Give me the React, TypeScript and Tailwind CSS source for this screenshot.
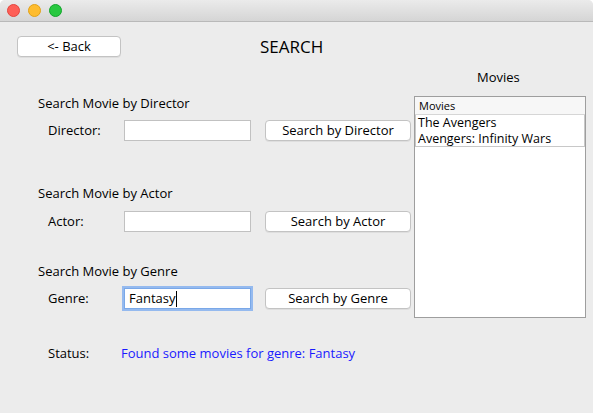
import React, { useState } from "react";

const font = { fontFamily: '"Open Sans", "Noto Sans", sans-serif' };

const MacButton = ({ children, className = "" }: { children: React.ReactNode; className?: string }) => (
  <button
    className={`h-[21px] rounded-[4px] border border-[#c3c3c3] bg-white text-[13px] leading-none text-black shadow-[0_1px_0_rgba(0,0,0,0.06)] ${className}`}
  >
    {children}
  </button>
);

const SearchRow = ({
  label,
  value,
  button,
  focused = false,
}: {
  label: string;
  value?: string;
  button: string;
  focused?: boolean;
}) => (
  <div className="flex h-[21px] items-center">
    <span className="w-[86px] pl-[10px] text-[13px] text-black">{label}</span>
    <div
      className={`flex h-[21px] w-[127px] items-center bg-white px-[4px] text-[13px] text-black ${
        focused
          ? "border border-[#7aa8e8] shadow-[0_0_0_2px_rgba(120,170,240,0.75)]"
          : "border border-[#c1c1c1]"
      }`}
    >
      {value}
      {focused && <span className="ml-[1px] h-[16px] w-px bg-black" />}
    </div>
    <MacButton className="ml-[14px] w-[146px]">{button}</MacButton>
  </div>
);

export default function App() {
  const [movies] = useState(["The Avengers", "Avengers: Infinity Wars"]);

  return (
    <div className="h-[413px] w-[593px] bg-white" style={font}>
      <div className="flex h-full w-full flex-col overflow-hidden rounded-t-[5px] bg-[#ececec]">
        {/* title bar */}
        <div className="flex h-[22px] shrink-0 items-center gap-[8px] border-b border-[#b9b9b9] bg-gradient-to-b from-[#ebebeb] to-[#d5d5d5] pl-[7px]">
          <span className="h-[13px] w-[13px] rounded-full border border-[#e2463f] bg-[#fe5f57]" />
          <span className="h-[13px] w-[13px] rounded-full border border-[#e1a116] bg-[#febc2e]" />
          <span className="h-[13px] w-[13px] rounded-full border border-[#12a42b] bg-[#28c840]" />
        </div>

        {/* top row */}
        <div className="relative mt-[14px] flex h-[21px] shrink-0 items-center pl-[17px]">
          <MacButton className="w-[104px]">&lt;- Back</MacButton>
          <span className="ml-[139px] text-[17px] text-black">SEARCH</span>
        </div>

        {/* body */}
        <div className="flex flex-1">
          <div className="flex flex-col pl-[38px] pt-[38px]">
            <div className="text-[13px] leading-[16px] text-black">Search Movie by Director</div>
            <div className="mt-[9px]">
              <SearchRow label="Director:" button="Search by Director" />
            </div>

            <div className="mt-[44px] text-[13px] leading-[16px] text-black">Search Movie by Actor</div>
            <div className="mt-[10px]">
              <SearchRow label="Actor:" button="Search by Actor" />
            </div>

            <div className="mt-[31px] text-[13px] leading-[16px] text-black">Search Movie by Genre</div>
            <div className="mt-[9px]">
              <SearchRow label="Genre:" value="Fantasy" button="Search by Genre" focused />
            </div>

            <div className="mt-[36px] flex text-[13px] leading-[16px]">
              <span className="w-[83px] pl-[10px] text-black">Status:</span>
              <span className="text-[#1a1aff]">Found some movies for genre: Fantasy</span>
            </div>
          </div>

          <div className="ml-[3px] flex flex-col pt-[12px]">
            <div className="pl-[63px] text-[13px] leading-[16px] text-black">Movies</div>
            <div className="mt-[11px] h-[222px] w-[172px] border border-[#9e9e9e] bg-white">
              <div className="h-[18px] border-b border-[#d6d6d6] bg-[#f7f7f7] pl-[4px] text-[11px] leading-[17px] text-black">
                Movies
              </div>
              <div className="border-x border-b border-[#c8c8c8]">
                {movies.map((m) => (
                  <div key={m} className="pl-[2px] text-[12.5px] leading-[15.5px] text-black">
                    {m}
                  </div>
                ))}
              </div>
            </div>
          </div>
        </div>
      </div>
    </div>
  );
}
